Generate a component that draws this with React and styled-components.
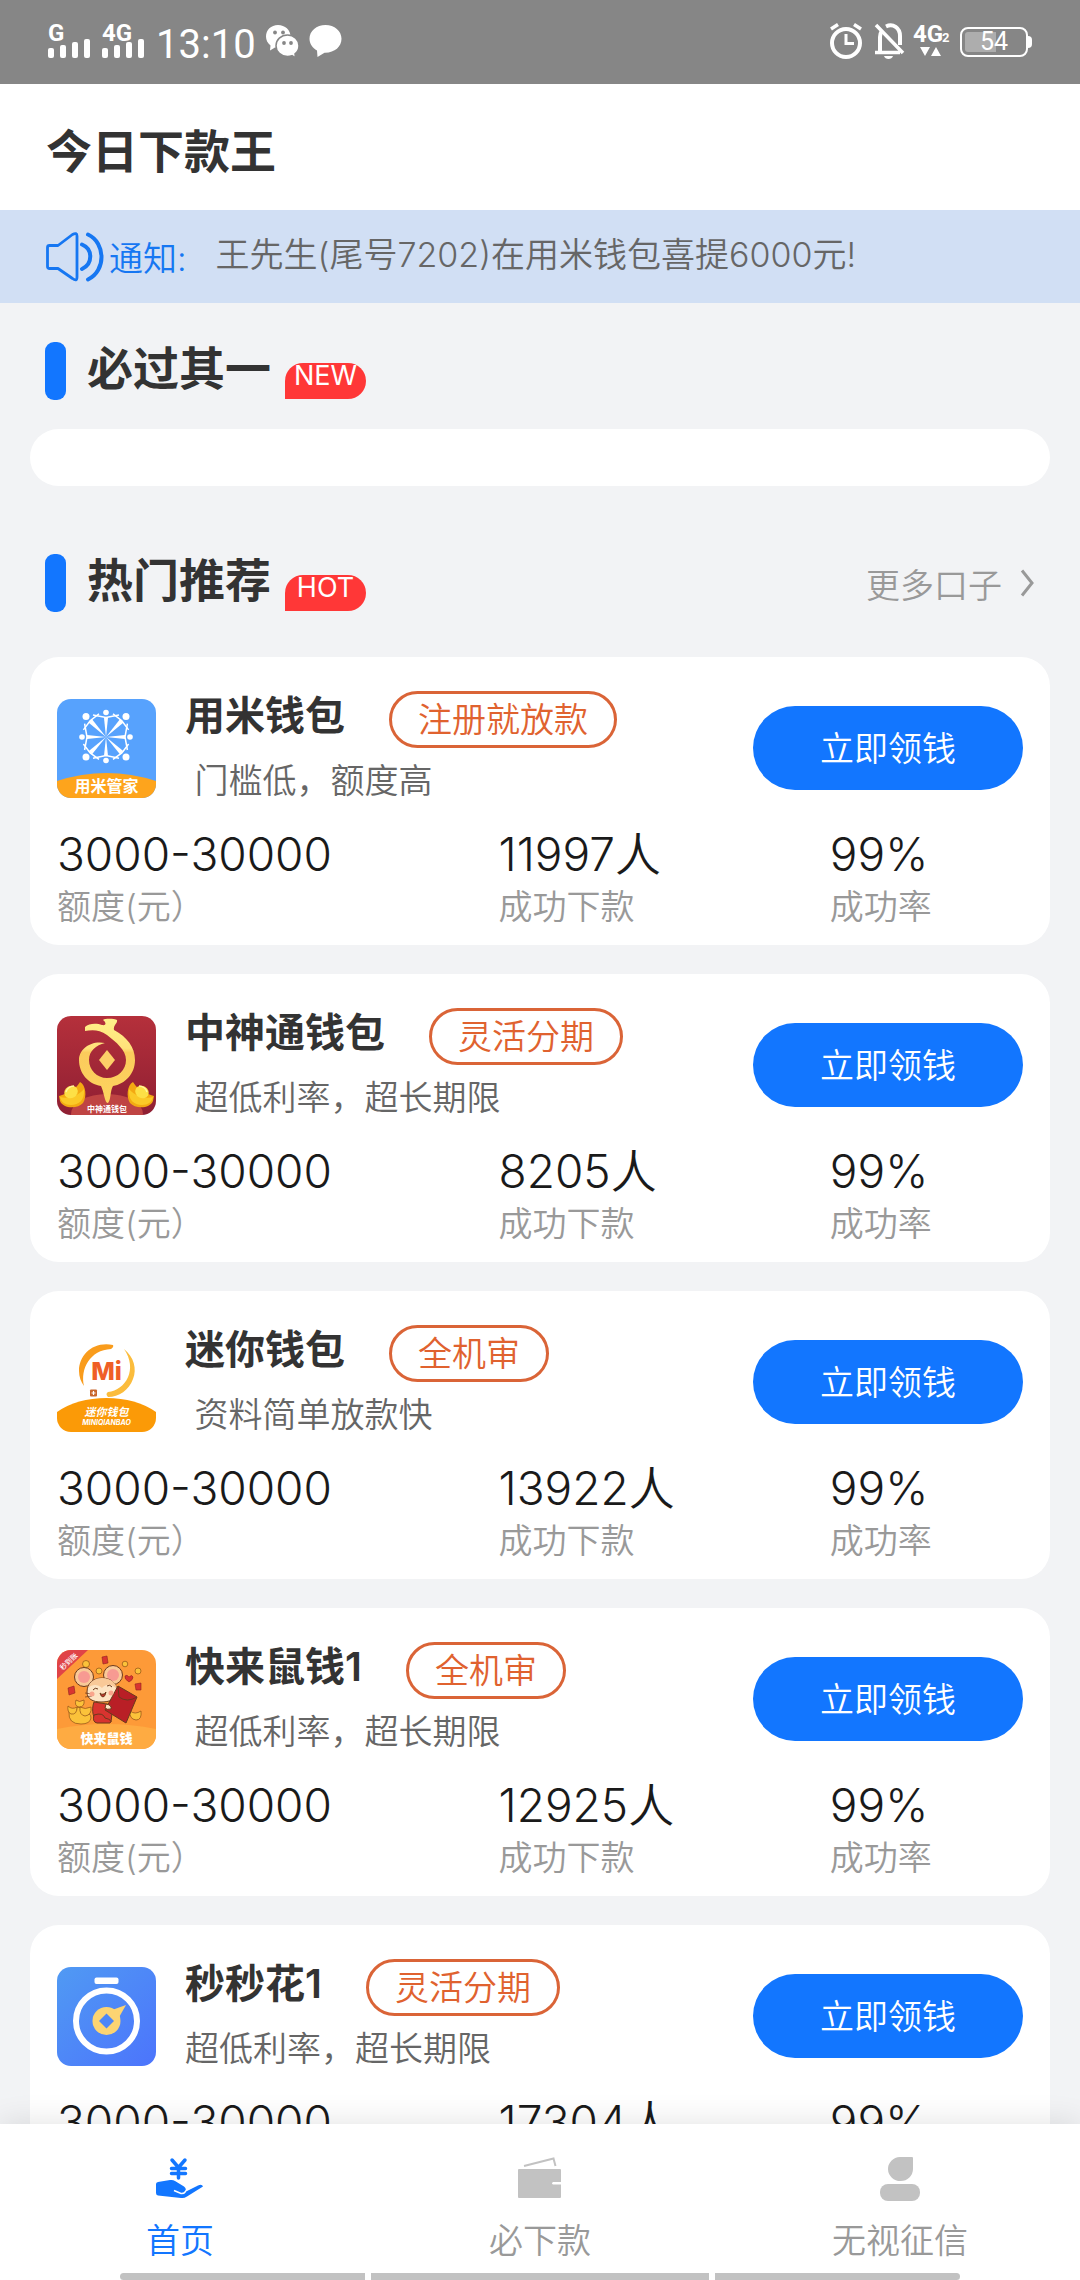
import React from 'react'
import styled, { createGlobalStyle } from 'styled-components'

const loans = [
  {
    name: '用米钱包',
    tag: '注册就放款',
    desc: ' 门槛低，额度高',
    people: '11997人',
    Logo: WheelLogo,
  },
  {
    name: '中神通钱包',
    tag: '灵活分期',
    desc: ' 超低利率，超长期限',
    people: '8205人',
    Logo: GoldLogo,
  },
  {
    name: '迷你钱包',
    tag: '全机审',
    desc: ' 资料简单放款快',
    people: '13922人',
    Logo: MiniLogo,
  },
  {
    name: '快来鼠钱1',
    tag: '全机审',
    desc: ' 超低利率，超长期限',
    people: '12925人',
    Logo: MouseLogo,
  },
  {
    name: '秒秒花1',
    tag: '灵活分期',
    desc: '超低利率，超长期限',
    people: '17304人',
    Logo: WatchLogo,
  },
]

const App = () => {
  return (
    <Page>
      <GlobalStyle />
      <StatusBar>
        <div className='side'>
          <Signal label='G' />
          <Signal label='4G' />
          <Clock>13:10</Clock>
          <ChatIcons />
        </div>
        <div className='side'>
          <AlarmIcons />
          <Battery>
            <span>54</span>
          </Battery>
        </div>
      </StatusBar>
      <Header>
        <h1>今日下款王</h1>
      </Header>
      <Notice>
        <SpeakerIcon />
        <span className='label'>通知:</span>
        <p>王先生(尾号7202)在用米钱包喜提6000元!</p>
      </Notice>
      <Content>
        <SectionHead>
          <h2>必过其一</h2>
          <Badge>NEW</Badge>
        </SectionHead>
        <EmptyCard />
        <SectionHead $spaced>
          <h2>热门推荐</h2>
          <Badge>HOT</Badge>
          <More href='#more'>
            更多口子
            <svg width='15' height='28' viewBox='0 0 15 28' fill='none'>
              <path d='M2 1.5L12 14L2 26.5' stroke='#999' strokeWidth='3' />
            </svg>
          </More>
        </SectionHead>
        <List>
          {loans.map((item) => {
            const { name, tag, desc, people, Logo } = item
            return (
              <Card key={name}>
                <CardTop>
                  <LogoBox>
                    <Logo />
                  </LogoBox>
                  <Info>
                    <div className='title'>
                      <h3>{name}</h3>
                      <Tag>{tag}</Tag>
                    </div>
                    <p>{desc}</p>
                  </Info>
                  <GetButton type='button'>立即领钱</GetButton>
                </CardTop>
                <Stats>
                  <div>
                    <dd>3000-30000</dd>
                    <dt>额度(元）</dt>
                  </div>
                  <div>
                    <dd>{people}</dd>
                    <dt>成功下款</dt>
                  </div>
                  <div>
                    <dd>99%</dd>
                    <dt>成功率</dt>
                  </div>
                </Stats>
              </Card>
            )
          })}
        </List>
      </Content>
      <Nav>
        <div className='tabs'>
          <Tab href='#home' $active>
            <HandIcon />
            首页
          </Tab>
          <Tab href='#loans'>
            <WalletIcon />
            必下款
          </Tab>
          <Tab href='#credit'>
            <PersonIcon />
            无视征信
          </Tab>
        </div>
        <GestureBar>
          <i />
          <i />
          <i />
        </GestureBar>
      </Nav>
    </Page>
  )
}

function Signal({ label }) {
  return (
    <svg width='44' height='38' viewBox='0 0 44 38' fill='#fff'>
      <text
        x='0'
        y='18'
        fontFamily='Roboto, sans-serif'
        fontSize='24'
        fontWeight='700'
      >
        {label}
      </text>
      <rect x='0' y='25' width='6' height='10' rx='2' />
      <rect x='12' y='22' width='6' height='13' rx='2' />
      <rect x='24' y='19' width='6' height='16' rx='2' />
      <rect x='36' y='16' width='6' height='19' rx='2' />
    </svg>
  )
}

function ChatIcons() {
  return (
    <svg width='76' height='34' viewBox='0 0 76 34'>
      <path
        d='M12 0C5 0 0 5 0 11.500C0 15 1.500 18 4.500 20.500L4 25.500L9 22.500C10 22.800 11 23 12 23C19 23 24.500 18 24.500 11.500C24.500 5 19 0 12 0Z'
        fill='#fff'
      />
      <path
        d='M21.500 10C15 10 10 14.800 10 20.700C10 26.700 15 31.500 21.500 31.500C23 31.500 24.500 31.200 26 30.700L29.500 33L29 28.800C31.500 26.800 33 24 33 20.700C33 14.800 28 10 21.500 10Z'
        fill='#fff'
        stroke='#868686'
        strokeWidth='1.500'
      />
      <g fill='#868686'>
        <circle cx='9' cy='7.500' r='1.900' />
        <circle cx='17' cy='7.500' r='1.900' />
        <circle cx='18' cy='18' r='1.900' />
        <circle cx='25' cy='18' r='1.900' />
      </g>
      <path
        d='M59.500 0C50.500 0 43.500 6 43.500 13.800C43.500 18.800 46.500 23 51 25.500L51.500 32L58.500 27.700C68.500 28 75.500 21.800 75.500 13.800C75.500 6 68.500 0 59.500 0Z'
        fill='#fff'
      />
    </svg>
  )
}

function AlarmIcons() {
  return (
    <svg width='120' height='38' viewBox='0 0 120 38' fill='none'>
      <g stroke='#fff' strokeWidth='4'>
        <circle cx='16' cy='20' r='14' />
        <path d='M16 11V20.500H24' strokeWidth='3' />
        <path d='M1 6L8 1.500M24 1.500L31 6' strokeWidth='3.500' />
        <path d='M50 29V14C50 11 51 9 52 7.500M56 3.500C63 0 70 5 70 13V22' />
        <path d='M45 29.500H70M46 2L73 30' strokeWidth='3.500' />
      </g>
      <path d='M54 33H63C62 37 55 37 54 33Z' fill='#fff' />
      <g fill='#fff' fontFamily='Roboto, sans-serif' fontWeight='700'>
        <text x='83' y='19' fontSize='24'>
          4G
        </text>
        <text x='112' y='19' fontSize='13'>
          2
        </text>
        <path d='M90 24H100L95 33ZM101 33H111L106 24Z' />
      </g>
    </svg>
  )
}

function SpeakerIcon() {
  return (
    <svg
      width='58'
      height='50'
      viewBox='0 0 58 50'
      fill='none'
      stroke='#1677f2'
      strokeLinecap='round'
      strokeLinejoin='round'
    >
      <path
        d='M3.500 13.500H12L26.500 2.500Q31 0 31 4V45Q31 50 26.500 46.500L12 36.500H3.500Q1.500 36.500 1.500 34.500V15.500Q1.500 13.500 3.500 13.500Z'
        strokeWidth='2.800'
      />
      <path d='M36 12.500C47 17 47 32 36 37' strokeWidth='4' />
      <path d='M42 2.500C60 11 60 39 42 47.500' strokeWidth='4' />
    </svg>
  )
}

function WheelLogo() {
  const people = [
    [49, 13.5],
    [69, 17.5],
    [73, 38],
    [69, 58],
    [49, 61.5],
    [29, 58],
    [25, 38],
    [29, 17.5],
  ]
  return (
    <svg viewBox='0 0 99 99'>
      <rect width='99' height='99' fill='#57a2fd' />
      {people.map(([x, y], i) => {
        const [nx, ny] = people[(i + 1) % 8]
        const [px, py] = people[(i + 7) % 8]
        const dx = (49 - x) / 24
        const dy = (38 - y) / 24
        return (
          <g key={i} fill='#fff'>
            <circle cx={x} cy={y} r={i % 2 ? 3.5 : 2.8} />
            <path
              d={`M${x + dx * 5 - dy * 2} ${y + dy * 5 + dx * 2}L49 38L${x + dx * 5 + dy * 2} ${y + dy * 5 - dx * 2}Z`}
            />
            <path
              d={`M${x * 0.35 + px * 0.65} ${y * 0.35 + py * 0.65}L${x + dx * 5} ${y + dy * 5}L${x * 0.35 + nx * 0.65} ${y * 0.35 + ny * 0.65}`}
              fill='none'
              stroke='#fff'
              strokeWidth='1.5'
            />
          </g>
        )
      })}
      <path d='M0 82Q49.500 66 99 82V99H0Z' fill='#fea41c' />
      <text
        x='49.5'
        y='93'
        fontSize='16'
        fontWeight='700'
        fill='#fff'
        textAnchor='middle'
      >
        用米管家
      </text>
    </svg>
  )
}

function Ingot({ flip }) {
  return (
    <g transform={flip ? 'translate(99 0) scale(-1 1)' : undefined}>
      <path
        d='M2 80C8 78 18 75 23 66C29 69 30 81 26 87C21 93 6 93 3 85Z'
        fill='#f3a912'
      />
      <path d='M3 81C10 83 20 81 27 73C28 84 22 89 14 89C8 89 4 86 3 81Z' fill='#fbc928' />
      <ellipse cx='14' cy='76' rx='7' ry='6' fill='#fde046' transform='rotate(-30 14 76)' />
      <path d='M9 76C10 72 14 70 17 70' stroke='#fff6a0' strokeWidth='1.500' fill='none' />
    </g>
  )
}

function GoldLogo() {
  return (
    <svg viewBox='0 0 99 99'>
      <defs>
        <linearGradient id='wine' x2='0' y2='1'>
          <stop offset='0' stopColor='#b5303b' />
          <stop offset='1' stopColor='#8f1f33' />
        </linearGradient>
        <linearGradient id='gold' x2='0' y2='1'>
          <stop offset='0' stopColor='#fff08a' />
          <stop offset='.35' stopColor='#ffe27a' />
          <stop offset='.4' stopColor='#fbcb5c' />
          <stop offset='1' stopColor='#fdd45e' />
        </linearGradient>
      </defs>
      <rect width='99' height='99' fill='url(#wine)' />
      <ellipse cx='50' cy='98' rx='36' ry='20' fill='#bf4443' />
      <path
        d='M28 11C32 7 40 7 45 9C50 10 49 6 46 4C49 2 58 3 60 4C61 7 56 9 57 14C70 21 78 31 78 44C78 58 68 68 56 70C53 75 54 84 51 87C48 88 47 76 44 70C31 68 22 57 22 44C22 33 34 24 48 27C39 29 32 35 32 44C32 54 40 62 50 62C61 62 69 54 69 44C69 34 59 26 50 19C42 13 34 14 28 15Z'
        fill='url(#gold)'
      />
      <path d='M50 34L58 44L50 54L42 44Z' fill='#fdd068' />
      <Ingot />
      <Ingot flip />
      <text
        x='50'
        y='96'
        fontSize='8'
        fontWeight='700'
        fill='#fff'
        textAnchor='middle'
      >
        中神通钱包
      </text>
    </svg>
  )
}

function MiniLogo() {
  return (
    <svg viewBox='0 0 99 99'>
      <rect width='99' height='99' fill='#fff' />
      <path
        d='M56 12C36 8 22 22 22 38C22 44 24 49 27 53C23 36 33 17 54 16Q57 14 56 12Z'
        fill='#f99c1c'
      />
      <path
        d='M67 16C77 24 80 36 76 46C72 57 62 64 51 64Q48 61 51 59C69 57 81 36 67 16Z'
        fill='#fbbc3c'
      />
      <g textAnchor='middle'>
        <text
          x='49.5'
          y='47'
          fontFamily='Inter, sans-serif'
          fontSize='25'
          fontWeight='800'
          fill='#ef5f26'
        >
          Mi
        </text>
        <rect x='33' y='56.500' width='7' height='7' rx='1' fill='#c8662c' />
        <path d='M36.500 58V62M34.500 60H38.500' stroke='#fff' strokeWidth='1.200' />
        <path d='M0 79Q20 65 49.500 65Q79 65 99 79V99H0Z' fill='#fb9a07' />
        <g fill='#fff' fontWeight='700' fontStyle='italic'>
          <text x='49.5' y='83' fontSize='11'>
            迷你钱包
          </text>
          <text x='49.5' y='92' fontSize='7' fontFamily='Inter, sans-serif'>
            MINIQIANBAO
          </text>
        </g>
      </g>
    </svg>
  )
}

function MouseLogo() {
  return (
    <svg viewBox='0 0 99 99'>
      <rect width='99' height='99' fill='#fd9a38' />
      <path d='M0 79Q49.500 69 99 79V99H0Z' fill='#feab42' />
      <path d='M0 0H31L0 29Z' fill='#e04447' />
      <text
        x='12'
        y='14'
        fontSize='7'
        fontWeight='500'
        fill='#fff'
        textAnchor='middle'
        transform='rotate(-43 12 12)'
      >
        秒到账
      </text>
      <g fill='#fbc23a' stroke='#9a5a1a' strokeWidth='.8'>
        <circle cx='29' cy='14' r='3.500' />
        <circle cx='42' cy='21' r='3' />
        <circle cx='68' cy='14' r='2.800' />
        <circle cx='81' cy='21' r='3' />
        <path d='M12 62Q20 64 20 57Q28 58 27 64Q34 62 34 68Q33 74 24 74Q11 74 12 62Z' />
        <path d='M19 50Q22 53 27 50Q28 57 22 57Q17 56 19 50Z' />
        <path d='M11 56Q15 60 20 57Q20 65 14 64Q10 62 11 56Z' />
        <path d='M23 57Q28 60 34 57Q35 65 28 66Q22 65 23 57Z' />
        <path d='M73 61Q78 65 84 61Q85 70 79 70Q72 69 73 61Z' />
      </g>
      <g fill='#d93430' stroke='#8e2420' strokeWidth='.6'>
        <path d='M45 7L50 6L51 13L46 14Z' />
        <path d='M11 38L17 36L18 43L12 45Z' />
        <path d='M78 34L84 33L84 40L79 40Z' />
        <path d='M72 32Q67 29 68 26Q70 24 72 27Q75 24 76 27Q76 30 72 32Z' />
      </g>
      <g stroke='#6b3a1c' strokeWidth='1'>
        <circle cx='27' cy='27' r='9.500' fill='#f9c998' />
        <circle cx='27' cy='27' r='6' fill='#f79a92' stroke='none' />
        <circle cx='56' cy='25' r='9.500' fill='#f9c998' />
        <circle cx='56' cy='25' r='6' fill='#f79a92' stroke='none' />
        <path d='M37 52C34 60 36 70 42 72H54L56 55Z' fill='#d8332f' />
        <path
          d='M30 42C30 33 37 28 45 28C54 28 60 34 60 41C60 50 52 52 44 52C36 52 30 49 30 42Z'
          fill='#fde4c4'
        />
        <path d='M31 38C33 31 39 28 45 28C54 28 59 33 60 39C54 33 48 34 45 38C41 34 35 34 31 38Z' fill='#f9c998' stroke='none' />
        <path d='M36 40Q38 37 41 39M50 36Q53 34 55 37' fill='none' />
        <path d='M43 43Q46 46 49 42Q48 47 46 47Q44 47 43 43Z' fill='#c5352f' />
        <path d='M28 43L35 44M28 47L35 46' fill='none' strokeWidth='.7' />
        <path d='M61 36L80 47L69 73L48 60Z' fill='#b91f26' />
        <path d='M61 36L62 47Q70 53 80 47' fill='none' />
        <circle cx='35' cy='44' r='2.500' fill='#f9a58c' stroke='none' />
        <circle cx='54' cy='43' r='2.500' fill='#f9a58c' stroke='none' />
        <path d='M49 54Q55 55 54 59Q50 60 48 58Z' fill='#fde4c4' />
        <path d='M37 65Q46 62 48 68Q56 70 53 73H40Q35 72 37 65Z' fill='#d8332f' />
      </g>
      <text
        x='49.5'
        y='92.5'
        fontSize='13'
        fontWeight='900'
        fill='#fff'
        textAnchor='middle'
      >
        快来鼠钱
      </text>
    </svg>
  )
}

function WatchLogo() {
  return (
    <svg viewBox='0 0 99 99'>
      <defs>
        <linearGradient id='sky' x2='1' y2='1'>
          <stop offset='0' stopColor='#509af3' />
          <stop offset='1' stopColor='#4c74fc' />
        </linearGradient>
      </defs>
      <rect width='99' height='99' fill='url(#sky)' />
      <rect x='37.500' y='10.500' width='24' height='6.500' rx='2' fill='#fff' />
      <circle cx='49.5' cy='54' r='30.500' fill='none' stroke='#fff' strokeWidth='6' />
      <path d='M55 43L69 38L61 52Z' fill='#fcd472' />
      <circle cx='49.5' cy='54' r='14' fill='#fcd472' />
      <path d='M49.500 46.500L57 54L49.500 61.500L42 54Z' fill='#4d86f7' />
    </svg>
  )
}

function HandIcon() {
  return (
    <svg width='48' height='44' viewBox='0 0 48 44'>
      <path
        d='M16 3L22.500 10.500L29 3M22.500 10.500V21M15.500 11.500H29.500M15.500 16.500H29.500'
        stroke='#1276ff'
        strokeWidth='3.500'
        strokeLinecap='round'
        fill='none'
      />
      <path
        d='M2 25L14 23Q17 22.500 19 24L28 29.500Q31 32 29 34L31 34L42 28.500Q46 26.500 47 29.500L31 39.500Q28 41.500 25 41L2 38.500Q0 38 0 36V27Q0 25.500 2 25Z'
        fill='#1276ff'
      />
      <path d='M18 33.500L25 36.500Q28 37 30 34' stroke='#fff' strokeWidth='1.500' fill='none' />
    </svg>
  )
}

function WalletIcon() {
  return (
    <svg width='44' height='44' viewBox='0 0 44 44'>
      <path d='M6 9L35.500 1.500L37.500 9' stroke='#c2c2c2' strokeWidth='2' fill='none' />
      <path
        d='M1 12H42Q43 12 43 13V25H35Q33 26.300 35 27.600H43V40Q43 41 42 41H1Q0 41 0 40V13Q0 12 1 12Z'
        fill='#c2c2c2'
      />
    </svg>
  )
}

function PersonIcon() {
  return (
    <svg width='40' height='44' viewBox='0 0 40 44' fill='#c2c2c2'>
      <path d='M20 0H32Q33 0 33 1V12A12.500 12 0 1 1 20 0Z' />
      <rect y='27' width='40' height='17' rx='8' />
    </svg>
  )
}

const GlobalStyle = createGlobalStyle`
  body {
    margin: 0;
    background: #f2f3f5;
    color: #333;
    font-family: Inter, 'Noto Sans CJK SC', sans-serif;
    font-size: 34px;
    font-weight: 350;
  }
  h1, h2, h3, p, dl, dd, dt {
    margin: 0;
  }
  h1, h2, h3 {
    font-weight: 600;
  }
  a {
    text-decoration: none;
  }
  svg {
    display: block;
    flex: none;
    overflow: visible;
  }
`

const Page = styled.div`
  display: flex;
  flex-direction: column;
  height: 100vh;
`

const StatusBar = styled.div`
  display: flex;
  justify-content: space-between;
  align-items: center;
  box-sizing: border-box;
  height: 84px;
  padding: 0 48px;
  background: #868686;
  color: #fff;
  flex: none;

  .side {
    display: flex;
    align-items: center;
    gap: 10px;
  }
`

const Clock = styled.span`
  padding-top: 5px;
  font-family: Roboto, sans-serif;
  font-size: 40px;
  font-weight: 400;
  line-height: 48px;
`

const Battery = styled.div`
  position: relative;
  box-sizing: border-box;
  width: 68px;
  height: 30px;
  padding: 3px;
  margin-right: 4px;
  border: 2px solid #fff;
  border-radius: 8px;
  background: linear-gradient(90deg, #adadad 54%, transparent 54%) content-box;
  font-family: Roboto, sans-serif;
  font-size: 25px;
  font-weight: 400;
  line-height: 20px;
  text-align: center;

  &::after {
    content: '';
    position: absolute;
    right: -6px;
    top: 7px;
    width: 4px;
    height: 12px;
    border-radius: 0 4px 4px 0;
    background: #fff;
  }
`

const Header = styled.header`
  padding: 34px 46px 26px;
  background: #fff;
  flex: none;

  h1 {
    font-size: 46px;
    line-height: 66px;
  }
`

const Notice = styled.div`
  display: flex;
  align-items: center;
  height: 93px;
  padding: 0 46px;
  background: #d1dff4;
  flex: none;

  .label {
    margin: 0 29px 0 5px;
    color: #1677f2;
  }
  p {
    padding-bottom: 8px;
    color: #666;
  }
`

const Content = styled.main`
  flex: 1;
  min-height: 0;
  padding: 0 30px;
  overflow-y: auto;
  scrollbar-width: none;
`

const SectionHead = styled.div`
  display: flex;
  align-items: center;
  height: 58px;
  margin-top: ${(props) => (props.$spaced ? '68px' : '39px')};
  padding: 0 15px;

  &::before {
    content: '';
    width: 21px;
    height: 100%;
    margin-right: 21px;
    border-radius: 9px;
    background: #1276ff;
  }
  h2 {
    font-size: 46px;
    line-height: 52px;
    align-self: flex-start;
  }
`

const Badge = styled.span`
  width: 81px;
  height: 36px;
  margin: 20px 0 0 14px;
  border-radius: 18px 18px 18px 0;
  background: #ff3737;
  color: #fff;
  font-size: 27px;
  font-weight: 400;
  line-height: 26px;
  text-align: center;
`

const More = styled.a`
  display: flex;
  align-items: center;
  gap: 18px;
  margin-left: auto;
  color: #999;
`

const EmptyCard = styled.div`
  height: 57px;
  margin-top: 29px;
  border-radius: 29px;
  background: #fff;
`

const List = styled.div`
  display: flex;
  flex-direction: column;
  gap: 29px;
  margin-top: 45px;
`

const Card = styled.article`
  padding: 34px 27px 17px;
  border-radius: 29px;
  background: #fff;
`

const CardTop = styled.div`
  display: flex;
  align-items: center;
`

const LogoBox = styled.div`
  width: 99px;
  height: 99px;
  margin-right: 29px;
  border-radius: 14px;
  overflow: hidden;
  flex: none;
`

const Info = styled.div`
  flex: 1;

  .title {
    display: flex;
    gap: 44px;
  }
  h3 {
    font-size: 40px;
    line-height: 50px;
  }
  p {
    margin-top: 9px;
    color: #666;
    line-height: 48px;
    white-space: pre;
  }
`

const Tag = styled.span`
  padding: 0 26px;
  border: 3px solid #da6437;
  border-radius: 29px;
  color: #e0622f;
  line-height: 51px;
`

const GetButton = styled.button`
  width: 270px;
  height: 84px;
  padding: 0 0 4px;
  border: none;
  border-radius: 42px;
  background: #1276ff;
  color: #fff;
  font: inherit;
`

const Stats = styled.dl`
  display: grid;
  grid-template-columns: 16fr 12fr 7fr;
  margin-top: 22px;

  div {
    display: flex;
    flex-direction: column;
    gap: 5px;
  }
  dd {
    color: #1a1a1a;
    font-size: 46px;
    line-height: 54px;
  }
  dt {
    order: 1;
    color: #999;
    line-height: 42px;
  }
`

const Nav = styled.nav`
  position: relative;
  background: #fff;
  box-shadow: 0 0 30px rgba(0, 0, 0, 0.12);
  flex: none;

  .tabs {
    display: grid;
    grid-template-columns: 1fr 1fr 1fr;
    padding: 33px 0 8px;
  }
`

const Tab = styled.a`
  display: flex;
  flex-direction: column;
  align-items: center;
  gap: 16px;
  color: ${(props) => (props.$active ? '#1276ff' : '#999')};
  line-height: 48px;
`

const GestureBar = styled.div`
  display: grid;
  grid-template-columns: 8fr 11fr 8fr;
  gap: 6px;
  padding: 0 120px;

  i {
    height: 7px;
    background: #c2c2c2;
  }
  i:first-child {
    border-radius: 4px 0 0 4px;
  }
  i:last-child {
    border-radius: 0 4px 4px 0;
  }
`

export default App
